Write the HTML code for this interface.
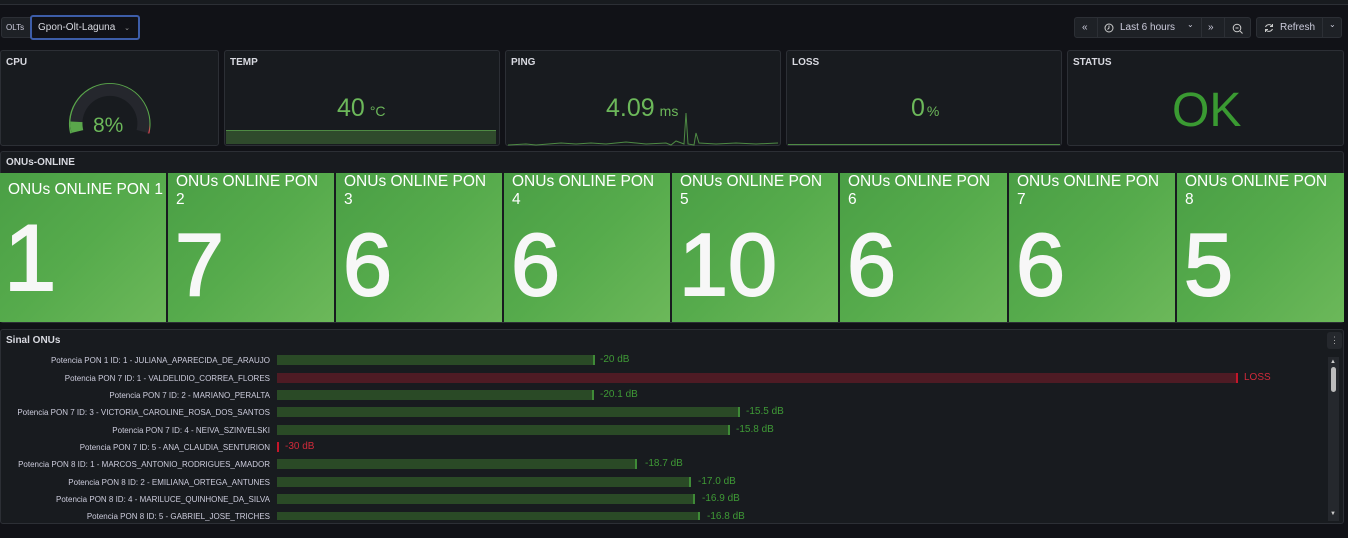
<!DOCTYPE html>
<html><head><meta charset="utf-8"><style>
*{box-sizing:border-box;margin:0;padding:0}
body{width:1348px;height:538px;background:#111217;font-family:"Liberation Sans",Arial,sans-serif;color:#ccccdc;position:relative;overflow:hidden}
.a{position:absolute}
.p{position:absolute;background:#181b1f;border:1px solid #2c2f35;border-radius:3px}
.t{position:absolute;left:5px;top:6px;font-size:10px;font-weight:bold;color:#d8d9e0}
.btn{position:absolute;top:17px;height:21px;background:#1e2126;border:1px solid #2c2f35;border-radius:3px;font-size:10px;color:#ccccdc}
.tile{position:absolute;top:173px;height:149px;background:linear-gradient(135deg,#4a9f45 0%,#56ab4c 50%,#6cb85a 100%);color:#fff}
.tile .h{position:absolute;left:8px;top:0;font-size:15.5px;line-height:18px;width:145px}
.tile .n{position:absolute;left:7px;font-size:88px;line-height:1;top:48px;color:#f7f7f7;-webkit-text-stroke:2px #f7f7f7}
.lab{position:absolute;right:1078px;font-size:8px;color:#ccccdc;white-space:nowrap}
.bar{position:absolute;left:277px;height:10px;background:#2a4a26;border-right:2px solid #3f8a37}
.val{position:absolute;font-size:10px;color:#3f9a36}
.big{font-weight:500}
</style></head><body>
<div class="a" style="left:0;top:0;width:1348px;height:5px;background:#181b1f;border-bottom:1px solid #2c2f35"></div>

<div class="btn" style="left:1px;top:17px;width:30px;border-radius:3px 0 0 3px;font-size:8px;padding:5px 0 0 4px">OLTs</div>
<div class="a" style="left:30px;top:15px;width:110px;height:25px;border:2px solid #3d5da8;border-radius:3px;background:#111217;font-size:10px;padding:5px 0 0 6px;color:#d8d9e0">Gpon-Olt-Laguna <span style="font-size:7px;margin-left:6px;color:#999">&#8964;</span></div>

<div class="btn" style="left:1074px;width:177px">
 <span class="a" style="left:7px;top:4px">&laquo;</span>
 <span class="a" style="left:22px;top:0;height:19px;border-left:1px solid #2c2f35"></span>
 <svg class="a" style="left:29px;top:5px" width="10" height="10"><circle cx="5" cy="5" r="4" fill="none" stroke="#ccc" stroke-width="1"/><path d="M5 2.5V5L3.5 6.5" stroke="#ccc" fill="none"/></svg>
 <span class="a" style="left:45px;top:4px">Last 6 hours</span>
 <span class="a" style="left:112px;top:2px;font-size:8px">&#8964;</span>
 <span class="a" style="left:126px;top:0;height:19px;border-left:1px solid #2c2f35"></span>
 <span class="a" style="left:133px;top:4px">&raquo;</span>
 <span class="a" style="left:149px;top:0;height:19px;border-left:1px solid #2c2f35"></span>
 <svg class="a" style="left:157px;top:5px" width="11" height="11"><circle cx="5" cy="5" r="3.8" fill="none" stroke="#ccc"/><path d="M3.5 5h3M8 8l2.5 2.5" stroke="#ccc"/></svg>
</div>
<div class="btn" style="left:1256px;width:86px">
 <svg class="a" style="left:7px;top:5px" width="10" height="10"><path d="M8.5 3.5A4 4 0 0 0 1.5 4M1.5 6.5A4 4 0 0 0 8.5 6" fill="none" stroke="#ccc"/><path d="M8.5 1v2.5H6M1.5 9V6.5H4" fill="none" stroke="#ccc"/></svg>
 <span class="a" style="left:23px;top:4px">Refresh</span>
 <span class="a" style="left:65px;top:0;height:19px;border-left:1px solid #2c2f35"></span>
 <span class="a" style="left:72px;top:2px;font-size:8px">&#8964;</span>
</div>

<!-- stat row -->
<div class="p" style="left:0;top:50px;width:219px;height:96px"><div class="t">CPU</div>
<svg class="a" style="left:0;top:0" width="219" height="96">
 <path d="M69.9 82.3 A40 40 0 1 1 147.6 82.3" fill="none" stroke="#5aa64b" stroke-width="1.6"/>
 <path d="M144.4 62.0 A40 40 0 0 1 147.6 82.3" fill="none" stroke="#e0384f" stroke-width="1.8"/>
 <path d="M76.4 80.5 A33.5 33.5 0 1 1 141.4 80.5" fill="none" stroke="#25272d" stroke-width="12"/>
 <path d="M76.4 80.5 A33.5 33.5 0 0 1 75.5 70.8" fill="none" stroke="#5aa64b" stroke-width="12"/>
</svg>
<div class="a" style="left:92px;top:63px;font-size:21px;color:#6cb85a">8%</div></div>

<div class="p" style="left:224px;top:50px;width:276px;height:96px"><div class="t">TEMP</div>
<div class="a big" style="left:112px;top:43px;font-size:25px;color:#6cb85a">40<span style="font-size:14px;margin-left:5px">°C</span></div>
<div class="a" style="left:1px;top:79px;width:270px;height:14px;background:#2f4a2c;border-top:1px solid #4e8a44"></div></div>

<div class="p" style="left:505px;top:50px;width:276px;height:96px"><div class="t">PING</div>
<div class="a big" style="left:100px;top:43px;font-size:25px;color:#6cb85a">4.09<span style="font-size:14px;margin-left:5px">ms</span></div>
<svg class="a" style="left:0;top:50px" width="276" height="46"><path d="M2 44L20 43L30 44L55 42L70 43L85 42L100 43L120 41L140 43L160 42L165 44L170 40L178 43L180 12L182 43L188 44L190 32L193 42L210 43L230 42L250 43L272 42" fill="none" stroke="#4e8a44" stroke-width="1"/></svg></div>

<div class="p" style="left:786px;top:50px;width:276px;height:96px"><div class="t">LOSS</div>
<div class="a big" style="left:124px;top:43px;font-size:25px;color:#6cb85a">0<span style="font-size:14px;margin-left:2px">%</span></div>
<div class="a" style="left:1px;top:93px;width:272px;height:1px;background:#4e8a44"></div></div>

<div class="p" style="left:1067px;top:50px;width:277px;height:96px"><div class="t">STATUS</div>
<div class="a" style="left:104px;top:32px;font-size:48px;color:#3a9a32">OK</div></div>

<!-- ONUs online -->
<div class="p" style="left:0;top:151px;width:1344px;height:172px"><div class="t" style="top:5px">ONUs-ONLINE</div></div>
<div class="tile" style="left:0;width:166px"><div class="h" style="top:8px;white-space:nowrap;width:auto">ONUs ONLINE PON 1</div><div class="n" style="top:38px;left:4px;font-size:94px">1</div></div>
<div class="tile" style="left:168px;width:166px"><div class="h">ONUs ONLINE PON 2</div><div class="n">7</div></div>
<div class="tile" style="left:336px;width:166px"><div class="h">ONUs ONLINE PON 3</div><div class="n">6</div></div>
<div class="tile" style="left:504px;width:166px"><div class="h">ONUs ONLINE PON 4</div><div class="n">6</div></div>
<div class="tile" style="left:672px;width:166px"><div class="h">ONUs ONLINE PON 5</div><div class="n">10</div></div>
<div class="tile" style="left:840px;width:167px"><div class="h">ONUs ONLINE PON 6</div><div class="n">6</div></div>
<div class="tile" style="left:1009px;width:166px"><div class="h">ONUs ONLINE PON 7</div><div class="n">6</div></div>
<div class="tile" style="left:1177px;width:167px"><div class="h">ONUs ONLINE PON 8</div><div class="n">5</div></div>

<!-- Sinal -->
<div class="p" style="left:0;top:329px;width:1344px;height:195px"><div class="t" style="top:5px">Sinal ONUs</div>
<div class="a" style="left:1326px;top:2px;width:15px;height:17px;background:#25282d;border-radius:3px;color:#aaa;font-size:9px;text-align:center;line-height:17px">&#8942;</div>
<div class="a" style="left:1327px;top:27px;width:11px;height:164px;background:#25282d"><div class="a" style="left:3px;top:10px;width:5px;height:25px;background:#bbb;border-radius:3px"></div>
<div class="a" style="left:2px;top:2px;font-size:6px;color:#ccc">&#9650;</div><div class="a" style="left:2px;top:154px;font-size:6px;color:#ccc">&#9660;</div></div>
</div>

<div class="lab" style="top:356px">Potencia PON 1 ID: 1 - JULIANA_APARECIDA_DE_ARAUJO</div>
<div class="bar" style="top:355px;width:318px"></div><div class="val" style="left:600px;top:354px">-20 dB</div>
<div class="lab" style="top:374px">Potencia PON 7 ID: 1 - VALDELIDIO_CORREA_FLORES</div>
<div class="bar" style="top:373px;width:961px;background:#4e1b24;border-right-color:#c4162a"></div><div class="val" style="left:1244px;top:372px;color:#d02a3a">LOSS</div>
<div class="lab" style="top:391px">Potencia PON 7 ID: 2 - MARIANO_PERALTA</div>
<div class="bar" style="top:390px;width:317px"></div><div class="val" style="left:600px;top:389px">-20.1 dB</div>
<div class="lab" style="top:408px">Potencia PON 7 ID: 3 - VICTORIA_CAROLINE_ROSA_DOS_SANTOS</div>
<div class="bar" style="top:407px;width:463px"></div><div class="val" style="left:746px;top:406px">-15.5 dB</div>
<div class="lab" style="top:426px">Potencia PON 7 ID: 4 - NEIVA_SZINVELSKI</div>
<div class="bar" style="top:425px;width:453px"></div><div class="val" style="left:736px;top:424px">-15.8 dB</div>
<div class="lab" style="top:443px">Potencia PON 7 ID: 5 - ANA_CLAUDIA_SENTURION</div>
<div class="bar" style="top:442px;width:2px;background:#c4162a;border:0"></div><div class="val" style="left:285px;top:441px;color:#d02a3a">-30 dB</div>
<div class="lab" style="top:460px">Potencia PON 8 ID: 1 - MARCOS_ANTONIO_RODRIGUES_AMADOR</div>
<div class="bar" style="top:459px;width:360px"></div><div class="val" style="left:645px;top:458px">-18.7 dB</div>
<div class="lab" style="top:478px">Potencia PON 8 ID: 2 - EMILIANA_ORTEGA_ANTUNES</div>
<div class="bar" style="top:477px;width:414px"></div><div class="val" style="left:698px;top:476px">-17.0 dB</div>
<div class="lab" style="top:495px">Potencia PON 8 ID: 4 - MARILUCE_QUINHONE_DA_SILVA</div>
<div class="bar" style="top:494px;width:418px"></div><div class="val" style="left:702px;top:493px">-16.9 dB</div>
<div class="lab" style="top:512px">Potencia PON 8 ID: 5 - GABRIEL_JOSE_TRICHES</div>
<div class="bar" style="top:512px;width:423px;height:8px"></div><div class="val" style="left:707px;top:511px">-16.8 dB</div>
<div class="a" style="left:0;top:524px;width:1348px;height:14px;background:#111217"></div>
</body></html>
